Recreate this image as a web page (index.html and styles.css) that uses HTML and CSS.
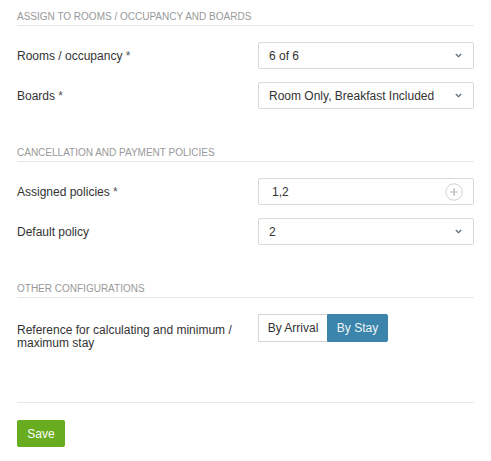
FILE: index.html
```html
<!DOCTYPE html>
<html>
<head>
    <title>Rate configuration</title>
    <link rel="stylesheet" href="styles.css">
</head>
<body>
    <div class="section">
        <h3 class="section-title">Assign to rooms / occupancy and boards</h3>
        <div class="form-row">
            <label class="form-label">Rooms / occupancy <span class="req">*</span></label>
            <div class="select">
                <span>6 of 6</span>
                <svg class="chevron" width="7" height="5" viewBox="0 0 7 5"><path d="M0.8 1 L3.5 3.7 L6.2 1" fill="none" stroke="#5b6b7c" stroke-width="1.3"/></svg>
            </div>
        </div>
        <div class="form-row">
            <label class="form-label">Boards <span class="req">*</span></label>
            <div class="select">
                <span>Room Only, Breakfast Included</span>
                <svg class="chevron" width="7" height="5" viewBox="0 0 7 5"><path d="M0.8 1 L3.5 3.7 L6.2 1" fill="none" stroke="#5b6b7c" stroke-width="1.3"/></svg>
            </div>
        </div>
    </div>

    <div class="section">
        <h3 class="section-title">Cancellation and payment policies</h3>
        <div class="form-row">
            <label class="form-label">Assigned policies <span class="req">*</span></label>
            <div class="select multi">
                <span>1,2</span>
                <svg class="plus" width="18" height="18" viewBox="0 0 18 18"><circle cx="9" cy="9" r="8.2" fill="#fff" stroke="#d0d0d0" stroke-width="1"/><path d="M9 5.3 V12.7 M5.3 9 H12.7" stroke="#c6c6c6" stroke-width="1.7"/></svg>
            </div>
        </div>
        <div class="form-row">
            <label class="form-label">Default policy</label>
            <div class="select">
                <span>2</span>
                <svg class="chevron" width="7" height="5" viewBox="0 0 7 5"><path d="M0.8 1 L3.5 3.7 L6.2 1" fill="none" stroke="#5b6b7c" stroke-width="1.3"/></svg>
            </div>
        </div>
    </div>

    <div class="section">
        <h3 class="section-title">Other configurations</h3>
        <div class="form-row">
            <label class="form-label tall">Reference for calculating and minimum / maximum stay</label>
            <div class="control">
                <div class="btn-group">
                    <button class="toggle">By Arrival</button>
                    <button class="toggle active">By Stay</button>
                </div>
            </div>
        </div>
    </div>

    <div class="footer">
        <button class="btn-save">Save</button>
    </div>
</body>
</html>
```

FILE: styles.css
```css
body {
    font-family: "Liberation Sans", Arial, sans-serif;
    font-size: 12px;
    color: #333;
    margin: 0;
    padding: 9px 17px 0;
}
.section {
    padding-bottom: 23px;
}
.section-title {
    margin: 0 0 16px;
    font-size: 10px;
    font-weight: normal;
    line-height: 16px;
    text-transform: uppercase;
    color: #999;
    border-bottom: 1px solid #e6e6e6;
}
.form-row {
    display: flex;
    align-items: flex-start;
    margin-bottom: 13px;
}
.form-label {
    flex: 1;
    padding: 7px 15px 0 0;
    line-height: 14px;
}
.form-label.tall {
    padding-top: 10px;
    margin-bottom: -8px;
    line-height: 13px;
}
.req {
    color: #555;
}
.select {
    width: 216px;
    height: 27px;
    box-sizing: border-box;
    border: 1px solid #d9d9d9;
    border-radius: 2px;
    display: flex;
    align-items: center;
    justify-content: space-between;
    padding: 0 11px 0 10px;
    background: #fff;
}
.select.multi {
    padding-left: 13px;
    padding-right: 10px;
}
.chevron {
    display: block;
}
.plus {
    display: block;
}
.control {
    width: 216px;
}
.btn-group {
    display: flex;
}
.toggle {
    font-family: inherit;
    font-size: 12px;
    height: 28px;
    margin: 0;
    padding: 0;
    white-space: nowrap;
    border: 1px solid #d6d6d6;
    background: #fff;
    color: #333;
    cursor: pointer;
}
.toggle:first-child {
    border-radius: 2px 0 0 2px;
    border-right: none;
    width: 69px;
}
.toggle.active {
    background-color: #3b84ab;
    border-color: #3b84ab;
    color: #eef4f8;
    border-radius: 0 2px 2px 0;
    width: 61px;
}
.footer {
    border-top: 1px solid #e8e8e8;
    margin-top: 24px;
    padding-top: 17px;
}
.btn-save {
    font-family: inherit;
    font-size: 12px;
    width: 48px;
    height: 27px;
    padding: 0;
    border: none;
    border-radius: 2px;
    background-color: #68ac1f;
    color: #fff;
    cursor: pointer;
}
```
